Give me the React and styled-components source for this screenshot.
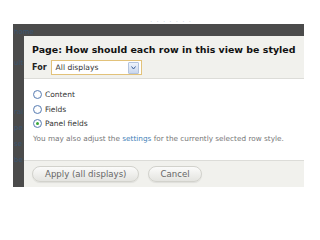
import React from "react";
import styled, { createGlobalStyle } from "styled-components";

const Global = createGlobalStyle`
  html, body { margin: 0; padding: 0; background: #ffffff; }
  body { width: 320px; height: 240px; overflow: hidden; font-family: "DejaVu Sans", Verdana, sans-serif; }
`;

const Page = styled.div`
  position: relative;
  width: 320px;
  height: 240px;
  padding: 24px 0 0 13px;
  box-sizing: border-box;
`;

const TopText = styled.div`
  position: absolute;
  top: 18px;
  left: 150px;
  font-size: 7px;
  color: #c9d3dd;
  letter-spacing: 1px;
`;

const Overlay = styled.div`
  width: 291px;
  height: 163px;
  background: #4b4b4b;
  padding: 12px 0 0 11px;
  box-sizing: border-box;
  position: relative;
`;

const Ghost = styled.span`
  position: absolute;
  left: 1px;
  top: ${(p) => p.$top}px;
  font-size: 7px;
  color: #3a5570;
  font-family: "DejaVu Sans", sans-serif;
`;

const Modal = styled.div`
  position: relative;
  z-index: 1;
  width: 280px;
  height: 151px;
  display: flex;
  flex-direction: column;
  background: #ffffff;
`;

const Header = styled.div`
  background: #f1f1ed;
  height: 43px;
  border-bottom: 1px solid #dcdcd8;
  padding: 8px 0 0 8px;
  box-sizing: border-box;
  display: flex;
  flex-direction: column;
  gap: 5px;
`;

const Title = styled.h2`
  margin: 0;
  font-family: "DejaVu Sans", sans-serif;
  font-weight: bold;
  font-size: 9.45px;
  color: #111;
  white-space: nowrap;
`;

const ForRow = styled.div`
  display: flex;
  align-items: center;
  gap: 4px;
`;

const ForLabel = styled.span`
  font-weight: bold;
  font-size: 8px;
  color: #222;
`;

const Select = styled.div`
  width: 91px;
  height: 15px;
  box-sizing: border-box;
  border: 1px solid #e2c27a;
  background: #fff;
  display: flex;
  align-items: center;
  justify-content: space-between;
  padding: 0 2px 0 4px;
  font-size: 7.6px;
  color: #333;
`;

const Arrow = styled.span`
  width: 9px;
  height: 10px;
  background: linear-gradient(#eef3fb, #c9d7ee);
  border: 1px solid #b3c3de;
  border-radius: 1px;
  display: flex;
  align-items: center;
  justify-content: center;
`;

const Body = styled.div`
  flex: 1;
  padding: 10px 0 0 9px;
  display: flex;
  flex-direction: column;
  gap: 3.5px;
`;

const RadioRow = styled.label`
  display: flex;
  align-items: center;
  gap: 3px;
  font-size: 7.5px;
  color: #333;
  height: 11px;
`;

const Radio = styled.span`
  width: 7px;
  height: 7px;
  border-radius: 50%;
  border: 1px solid #5b7fb4;
  background: radial-gradient(circle, #ffffff 40%, #e4e9f0 100%);
  display: flex;
  align-items: center;
  justify-content: center;
  &::after {
    content: "";
    width: 3px;
    height: 3px;
    border-radius: 50%;
    background: ${(p) => (p.$checked ? "#3aa83a" : "transparent")};
  }
`;

const Help = styled.p`
  margin: 1px 0 0;
  font-size: 7.3px;
  color: #777;
  white-space: nowrap;
`;

const Link = styled.a`
  color: #3f7fb8;
  text-decoration: none;
`;

const Footer = styled.div`
  background: #f1f1ed;
  border-top: 1px solid #dcdcd8;
  height: 27px;
  box-sizing: border-box;
  display: flex;
  align-items: center;
  gap: 9px;
  padding: 0 0 0 8px;
`;

const Button = styled.button`
  height: 16px;
  padding: 0 ${(p) => p.$pad}px;
  border-radius: 8px;
  border: 1px solid #d2d2cc;
  background: linear-gradient(#fbfbfa, #e4e4e0);
  font-family: "DejaVu Sans", sans-serif;
  font-size: 8.6px;
  color: #666;
  box-shadow: 0 1px 1px rgba(0,0,0,0.08);
`;

export default function App() {
  return (
    <>
      <Global />
      <Page>
        <TopText>· · · · · · ·</TopText>
        <Overlay>
          <Ghost $top={4}>home</Ghost>
          <Ghost $top={35}>ult</Ghost>
          <Ghost $top={84}>ral</Ghost>
          <Ghost $top={100}>pe</Ghost>
          <Ghost $top={116}>se</Ghost>
          <Ghost $top={132}>be</Ghost>
          <Modal>
            <Header>
              <Title>Page: How should each row in this view be styled</Title>
              <ForRow>
                <ForLabel>For</ForLabel>
                <Select>
                  All displays
                  <Arrow>
                    <svg width="5" height="4" viewBox="0 0 5 4">
                      <path d="M0.5 0.5 L2.5 3 L4.5 0.5" fill="none" stroke="#3b5f9a" strokeWidth="1" />
                    </svg>
                  </Arrow>
                </Select>
              </ForRow>
            </Header>
            <Body>
              <RadioRow><Radio />Content</RadioRow>
              <RadioRow><Radio />Fields</RadioRow>
              <RadioRow><Radio $checked />Panel fields</RadioRow>
              <Help>
                You may also adjust the <Link>settings</Link> for the currently selected row style.
              </Help>
            </Body>
            <Footer>
              <Button $pad={12}>Apply (all displays)</Button>
              <Button $pad={11}>Cancel</Button>
            </Footer>
          </Modal>
        </Overlay>
      </Page>
    </>
  );
}
